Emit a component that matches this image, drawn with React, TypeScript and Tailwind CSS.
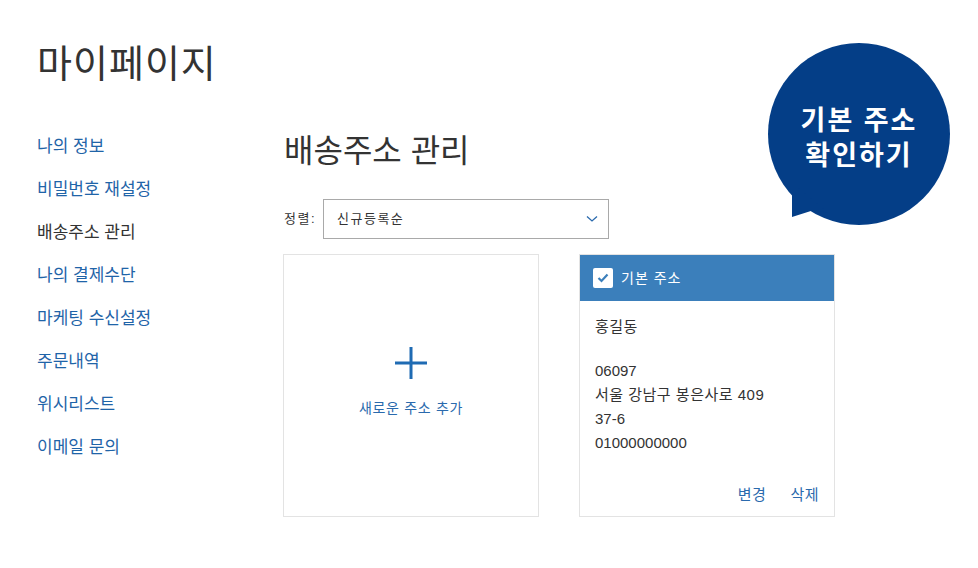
import React from "react";

const font = { fontFamily: '"Liberation Sans", "Noto Sans CJK KR", sans-serif' };

const menu = [
  "나의 정보",
  "비밀번호 재설정",
  "배송주소 관리",
  "나의 결제수단",
  "마케팅 수신설정",
  "주문내역",
  "위시리스트",
  "이메일 문의",
];

export default function App() {
  return (
    <div className="relative w-[978px] h-[568px] bg-white overflow-hidden text-[#333]" style={font}>
      <div className="pl-[37px] pt-[42px]">
        <h1 className="text-[38px] leading-[44px] tracking-[1px] font-normal text-[#333]">마이페이지</h1>
      </div>
      <div className="flex mt-[39px] pl-[37px]">
        <nav className="w-[246px] flex flex-col">
          {menu.map((m) => (
            <div
              key={m}
              className={`text-[17px] leading-[43px] ${m === "배송주소 관리" ? "text-[#333]" : "text-[#1f64a8]"}`}
            >
              {m}
            </div>
          ))}
        </nav>
        <main className="w-[552px] flex flex-col">
          <h2 className="text-[32px] leading-[52px] font-normal text-[#333] pl-[1px]">배송주소 관리</h2>
          <div className="flex items-center mt-[22px] pl-[1px]">
            <span className="text-[13px] tracking-[1.5px] text-[#333] w-[39px]">정렬:</span>
            <div className="w-[286px] h-[40px] border border-[#a9a9a9] flex items-center justify-between pl-[13px] pr-[10px]">
              <span className="text-[13px] tracking-[1.5px] text-[#333]">신규등록순</span>
              <svg width="12" height="8" viewBox="0 0 12 8" fill="none">
                <path d="M1 1.5 L6 6 L11 1.5" stroke="#2a6aad" strokeWidth="1.3" />
              </svg>
            </div>
          </div>
          <div className="flex gap-[40px] mt-[15px]">
            <div className="w-[256px] h-[263px] border border-[#e3e3e3] flex flex-col items-center justify-center">
              <svg width="32" height="32" viewBox="0 0 32 32" className="mt-[-6px]">
                <rect x="14.5" y="0" width="3" height="32" fill="#1f6bb3" />
                <rect x="0" y="14.5" width="32" height="3" fill="#1f6bb3" />
              </svg>
              <div className="text-[14px] tracking-[0.7px] text-[#2a6aad] mt-[19px]">새로운 주소 추가</div>
            </div>
            <div className="w-[256px] h-[263px] border border-[#e3e3e3] flex flex-col">
              <div className="h-[46px] bg-[#3b7fbb] flex items-center pl-[13px] gap-[8px]">
                <div className="w-[20px] h-[20px] bg-white rounded-[2px] flex items-center justify-center">
                  <svg width="12" height="10" viewBox="0 0 12 10" fill="none">
                    <path d="M1.5 5 L4.5 8 L10.5 1.5" stroke="#3b7fbb" strokeWidth="2.2" />
                  </svg>
                </div>
                <span className="text-[14px] tracking-[1px] text-white">기본 주소</span>
              </div>
              <div className="flex-1 flex flex-col px-[15px] pt-[14px] pb-[9px] text-[15px] leading-[24px] tracking-[0.5px] text-[#333]">
                <div>홍길동</div>
                <div className="mt-[20px]">
                  <div className="tracking-normal">06097</div>
                  <div>서울 강남구 봉은사로 409</div>
                  <div className="tracking-normal">37-6</div>
                  <div className="tracking-normal">01000000000</div>
                </div>
                <div className="mt-auto flex justify-end gap-[24px] text-[#2a6aad]">
                  <span>변경</span>
                  <span>삭제</span>
                </div>
              </div>
            </div>
          </div>
        </main>
      </div>
      <div className="absolute left-[768px] top-[43px] w-[182px] h-[182px]">
        <svg className="absolute left-0 top-0" width="182" height="182" viewBox="0 0 182 182">
          <circle cx="91" cy="91" r="91" fill="#043e87" />
          <polygon points="24,140 24,174 46,167 60,170" fill="#043e87" />
        </svg>
        <div className="absolute inset-0 flex flex-col items-center justify-center text-white font-bold text-[27px] leading-[35px] tracking-[2px] pt-[9px]">
          <div>기본 주소</div>
          <div>확인하기</div>
        </div>
      </div>
    </div>
  );
}
